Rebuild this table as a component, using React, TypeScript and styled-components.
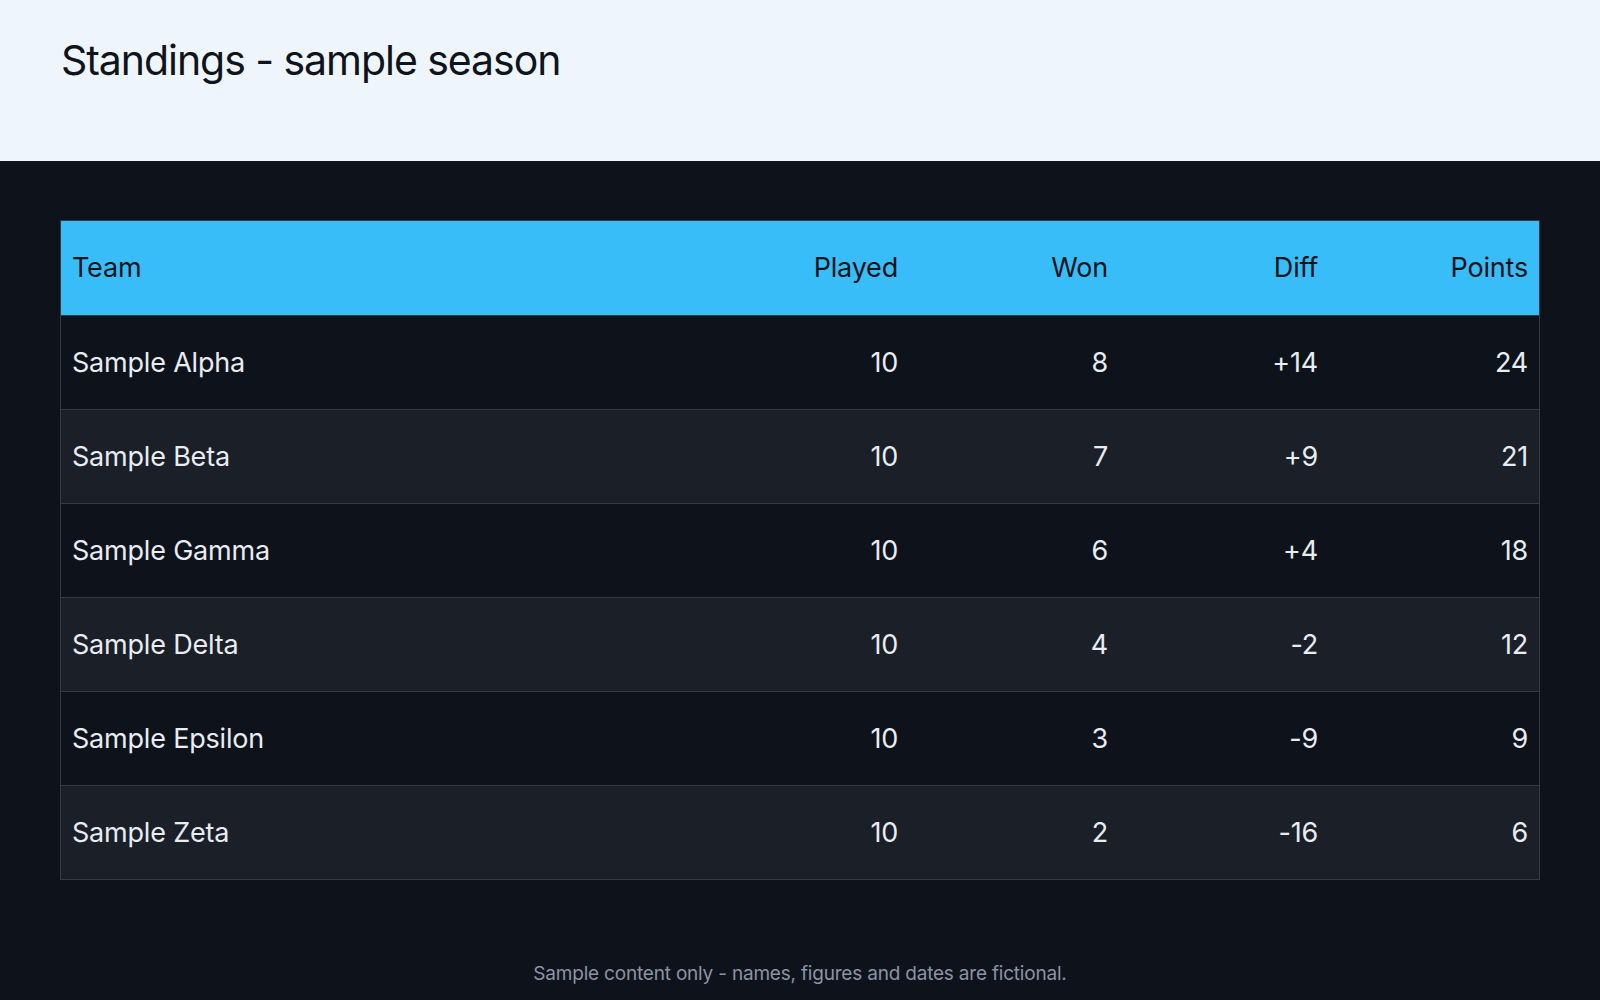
import * as React from "react";
import styled, { createGlobalStyle } from "styled-components";

const GlobalStyle = createGlobalStyle`
  html, body {
    margin: 0;
    padding: 0;
    background: #0e121a;
  }
  body {
    font-family: Inter, "Noto Sans", sans-serif;
  }
`;

const Page = styled.div`
  min-height: 1000px;
  background-color: #0e121a;
  display: flex;
  flex-direction: column;
`;

const Header = styled.header`
  background-color: #eff5fd;
  height: 161px;
  box-sizing: border-box;
  padding: 35px 61px 0;
`;

const Title = styled.h1`
  margin: 0;
  color: #0f131b;
  font-size: 41px;
  font-weight: 400;
  letter-spacing: -1.05px;
  line-height: 50px;
`;

const Main = styled.main`
  padding: 59px 60px 0;
`;

const Table = styled.table`
  width: 100%;
  border-collapse: collapse;
  border: 1px solid #363a44;
  table-layout: fixed;
`;

const HeadCell = styled.th<{ $align?: "left" | "right"; $width?: number }>`
  background-color: #38bdf8;
  color: #0f131b;
  font-weight: 400;
  font-size: 27px;
  line-height: 30px;
  padding: 32px 11px 32px;
  text-align: ${(p) => p.$align ?? "right"};
  width: ${(p) => (p.$width ? `${p.$width}px` : "auto")};
  letter-spacing: -0.2px;
`;

const Row = styled.tr<{ $alt: boolean }>`
  background-color: ${(p) => (p.$alt ? "#1b1f28" : "#0e121a")};
  border-top: 1px solid #363a44;
`;

const Cell = styled.td<{ $align?: "left" | "right" }>`
  color: #e8ecf3;
  font-size: 27px;
  line-height: 30px;
  padding: 32px 11px 31px;
  text-align: ${(p) => p.$align ?? "right"};
  letter-spacing: -0.2px;
`;

const Footer = styled.footer`
  margin-top: auto;
  padding: 0 0 15px;
  text-align: center;
  color: #8a94a6;
  font-size: 19px;
  letter-spacing: -0.2px;
`;

type Team = {
  name: string;
  played: number;
  won: number;
  diff: string;
  points: number;
};

const teams: Team[] = [
  { name: "Sample Alpha", played: 10, won: 8, diff: "+14", points: 24 },
  { name: "Sample Beta", played: 10, won: 7, diff: "+9", points: 21 },
  { name: "Sample Gamma", played: 10, won: 6, diff: "+4", points: 18 },
  { name: "Sample Delta", played: 10, won: 4, diff: "-2", points: 12 },
  { name: "Sample Epsilon", played: 10, won: 3, diff: "-9", points: 9 },
  { name: "Sample Zeta", played: 10, won: 2, diff: "-16", points: 6 },
];

export default function App() {
  return (
    <Page>
      <GlobalStyle />
      <Header>
        <Title>Standings - sample season</Title>
      </Header>
      <Main>
        <Table>
          <thead>
            <tr>
              <HeadCell $align="left">Team</HeadCell>
              <HeadCell $width={188}>Played</HeadCell>
              <HeadCell $width={188}>Won</HeadCell>
              <HeadCell $width={188}>Diff</HeadCell>
              <HeadCell $width={188}>Points</HeadCell>
            </tr>
          </thead>
          <tbody>
            {teams.map((t, i) => (
              <Row key={t.name} $alt={i % 2 === 1}>
                <Cell $align="left">{t.name}</Cell>
                <Cell>{t.played}</Cell>
                <Cell>{t.won}</Cell>
                <Cell>{t.diff}</Cell>
                <Cell>{t.points}</Cell>
              </Row>
            ))}
          </tbody>
        </Table>
      </Main>
      <Footer>Sample content only - names, figures and dates are fictional.</Footer>
    </Page>
  );
}
